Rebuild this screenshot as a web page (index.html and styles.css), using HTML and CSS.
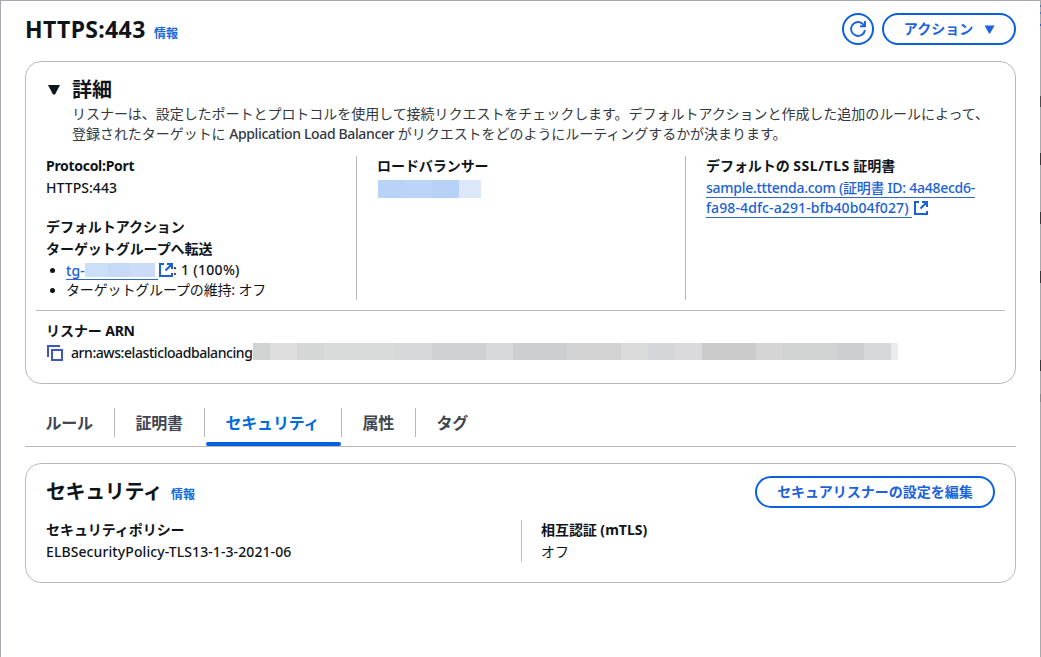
FILE: index.html
```html
<!DOCTYPE html>
<html lang="ja">
<head>
<meta charset="utf-8">
<title>HTTPS:443</title>
<link rel="stylesheet" href="styles.css">
</head>
<body>
<div class="page">
  <header class="page-header">
    <h1 class="title">HTTPS:443</h1>
    <a class="info">情報</a>
    <div class="actions">
      <button class="btn btn-round" aria-label="更新">
        <svg class="ico-refresh" width="18" height="18" viewBox="0 0 18 18" fill="none" stroke="currentColor" stroke-width="1.900"><path d="M16 10A7 7 0 1 1 14.3 4.300L16 6"/><path d="M16 1v5.200H11"/></svg>
      </button>
      <button class="btn btn-actions"><span>アクション</span>
        <svg width="11" height="9" viewBox="0 0 11 9"><path d="M.5.500h10L6 8.500H5z" fill="currentColor"/></svg>
      </button>
    </div>
  </header>

  <section class="card details">
    <div class="details-head">
      <svg class="caret" width="12" height="10" viewBox="0 0 12 10"><path d="M0 0h12L7 9.500H5z" fill="currentColor"/></svg>
      <div>
        <h2 class="h2">詳細</h2>
        <p class="desc">リスナーは、設定したポートとプロトコルを使用して接続リクエストをチェックします。デフォルトアクションと作成した追加のルールによって、<br>登録されたターゲットに <span class="lat">Application Load Balancer</span> がリクエストをどのようにルーティングするかが決まります。</p>
      </div>
    </div>
    <div class="cols">
      <div class="col">
        <h3 class="label lat-b">Protocol:Port</h3>
        <p class="value lat-wide">HTTPS:443</p>
        <h3 class="label second">デフォルトアクション</h3>
        <h3 class="label forward">ターゲットグループへ転送</h3>
        <ul class="list">
          <li><a class="link tg">tg-<span class="mask mask-tg"></span></a><svg class="ext" width="14" height="14" viewBox="0 0 14 14" fill="none" stroke="currentColor" stroke-width="2"><path d="M5 1H1v12h12v-3M8 1h5v5M13 1L6.500 7.500"/></svg><span class="weight">: 1 (100%)</span></li>
          <li>ターゲットグループの維持: オフ</li>
        </ul>
      </div>
      <div class="col">
        <h3 class="label">ロードバランサー</h3>
        <div class="mask mask-lb"></div>
      </div>
      <div class="col">
        <h3 class="label">デフォルトの <span class="ssl">SSL/TLS</span> 証明書</h3>
        <p class="value cert"><a class="link cert1">sample.tttenda.com (証明書 ID: 4a48ecd6-</a><br><a class="link cert2">fa98-4dfc-a291-bfb40b04f027)</a><svg class="ext" width="14" height="14" viewBox="0 0 14 14" fill="none" stroke="currentColor" stroke-width="2"><path d="M5 1H1v12h12v-3M8 1h5v5M13 1L6.500 7.500"/></svg></p>
      </div>
    </div>
    <div class="arn">
      <h3 class="label">リスナー <span class="lat-b">ARN</span></h3>
      <div class="arn-row">
        <svg class="copy" width="16" height="16" viewBox="0 0 16 16" fill="none" stroke="currentColor" stroke-width="2"><path d="M1 12V1h12"/><path d="M5 5h10v10H5z"/></svg>
        <span class="lat arn-text">arn:aws:elasticloadbalancing</span><span class="mask mask-arn"></span>
      </div>
    </div>
  </section>

  <nav class="tabs">
    <a class="tab t1">ルール</a>
    <a class="tab t2">証明書</a>
    <a class="tab t3 active">セキュリティ</a>
    <a class="tab t4">属性</a>
    <a class="tab t5">タグ</a>
  </nav>

  <section class="card security">
    <div class="sec-head">
      <h2 class="h2 sec-title">セキュリティ</h2>
      <a class="info">情報</a>
      <button class="btn btn-edit">セキュアリスナーの設定を編集</button>
    </div>
    <div class="sec-cols">
      <div class="sec-col">
        <h3 class="label">セキュリティポリシー</h3>
        <p class="value policy">ELBSecurityPolicy-TLS13-1-3-2021-06</p>
      </div>
      <div class="sec-col">
        <h3 class="label">相互認証 <span class="mtls">(mTLS)</span></h3>
        <p class="value">オフ</p>
      </div>
    </div>
  </section>
  <div class="edge"></div>
</div>
</body>
</html>
```
FILE: styles.css
```css
* { box-sizing: border-box; margin: 0; padding: 0; }
body {
  width: 1041px; height: 657px; overflow: hidden; background: #fff; color: #0f141a;
  font: 14px/20px "Noto Sans", "Noto Sans CJK JP", sans-serif;
  letter-spacing: -0.06px; white-space: nowrap;
}
.page {
  position: relative; width: 1041px; height: 657px; padding: 0 24px;
  border: solid #a9a8ae; border-width: 1px 1px 0 1px;
}
/* sliver of the neighbouring panel along the right edge */
.edge {
  position: absolute; right: -1px; top: 0; width: 1px; height: 656px;
  background: linear-gradient(#a9a8ae 0 4px, #3b7bd8 4px 6px, #a9a8ae 6px 11px, #3b7bd8 11px 13px, #a9a8ae 13px 23px, #1b62dc 23px 25px, #a9a8ae 25px 95px, #4c4c50 95px 106px, #a9a8ae 106px 152px, #38383c 152px 164px, #a9a8ae 164px 211px, #38383c 211px 223px, #a9a8ae 223px 270px, #38383c 270px 282px, #a9a8ae 282px 359px, #38383c 359px 370px, #a9a8ae 370px 393px, #85858a 393px 401px, #a9a8ae 401px);
}
.page-header { display: flex; height: 60px; }
.title { font-size: 23px; line-height: 30px; margin-top: 13px; width: 129px; letter-spacing: 0.35px; font-weight: 700; }
.info { color: #1469e0; font-size: 12px; font-weight: 700; line-height: 16px; margin-top: 25px; }
.actions { margin: 12px 0 0 auto; display: flex; gap: 8px; }
.btn {
  height: 32px; border: 2px solid #0b60dd; border-radius: 16px; background: #fff; color: #1b62dc;
  font: 700 14px/20px "Noto Sans", "Noto Sans CJK JP", sans-serif;
  display: flex; align-items: center; justify-content: center;
}
.btn-round { width: 32px; }
.btn-actions { width: 134px; gap: 11px; padding-left: 1px; }
.ico-refresh { flex: none; }
.card { border: 1px solid #b9babf; border-radius: 16px; width: 991px; }
.details { height: 323px; padding: 17px 10px 0; }
.details-head { display: flex; height: 77px; padding-left: 12px; gap: 12px; }
.caret { margin-top: 6px; }
.h2 { font-size: 20px; line-height: 22px; }
.desc { color: #333843; margin-top: 3px; letter-spacing: -0.04px; }
.cols { display: grid; grid-template-columns: 320px 329px 320px; height: 155px; padding-bottom: 10px; border-bottom: 1px solid #b9babf; }
.col { padding-left: 20px; }
.col:first-child { padding-left: 10px; }
.col + .col { border-left: 1px solid #b9babf; }
.label { font-size: 14px; line-height: 20px; font-weight: 700; margin-bottom: 2px; }
.second { margin-top: 19px; }
.forward { margin-bottom: 1px; }
.list { list-style: none; }
.list li { position: relative; padding-left: 20px; height: 20px; display: flex; align-items: center; }
.list li::before { content: ""; position: absolute; left: 4px; top: 8px; width: 5px; height: 5px; border-radius: 50%; background: #0f141a; }
.list li + li { letter-spacing: -0.15px; }
.link { color: #1b60d8; display: inline-block; height: 20px; line-height: 20px; border-bottom: 1px solid #3464cf; font-weight: 500; vertical-align: top; }
.tg { display: flex; width: 92px; height: 19px; letter-spacing: 0.1px; }
.ext { color: #1b60d8; }
.list .ext { margin-left: 1px; }
.cert1 { letter-spacing: -0.27px; }
.cert2 { letter-spacing: 0.11px; width: 206px; }
.cert .ext { margin-left: 2px; vertical-align: -2px; }
.mask { display: block; flex: none; }
.mask-tg { width: 70px; height: 14px; margin-top: 2px; background: linear-gradient(90deg, #cbdff9 0 23px, #c6daf7 23px 46px, #cadcf8 46px); }
.mask-lb { width: 103px; height: 18px; margin-top: 4px; margin-left: 1px; background: linear-gradient(90deg, #b9d2f7 0 26px, #bcd4f7 26px 54px, #b8d1f6 54px 81px, #dce8fa 81px); }
.arn { padding: 10px 0 0 10px; }
.arn-row { display: flex; align-items: center; height: 20px; padding-left: 1px; }
.copy { color: #3f57c4; flex: none; }
.arn-text { width: 182px; margin-left: 8px; }
.arn-row .arn-text { letter-spacing: -0.43px; }
.mask-arn {
  width: 645px; height: 17px; margin-top: -3px;
  background: linear-gradient(90deg, #d1d3d2 0 17px, #dedede 17px 44px, #d5d7d6 44px 71px, #d9dada 71px 141px, #d5d9da 141px 179px, #d0d1d2 179px 233px, #d8d9da 233px 260px, #cdcecf 260px 314px, #d3d3d4 314px 368px, #dbdbdc 368px 395px, #d5d6d9 395px 422px, #dadadc 422px 449px, #cbcbcb 449px 503px, #d4d5d4 503px 530px, #d1d3d2 530px 584px, #cdced0 584px 611px, #d7d8da 611px 638px, #ebebed 638px);
}
.lat { letter-spacing: -0.36px; font-weight: 500; }
.lat-wide { letter-spacing: 0.05px; font-weight: 500; }
.weight { letter-spacing: 0.3px; font-weight: 500; }
.policy { letter-spacing: 0.09px; font-weight: 500; }
.lat-b { letter-spacing: -0.3px; }
.ssl { letter-spacing: 0.55px; }
.mtls { letter-spacing: 0.05px; }
.tabs { display: flex; height: 63px; padding-top: 24px; border-bottom: 1px solid #b9babf; }
.tab { font-size: 16px; font-weight: 600; line-height: 30px; height: 29px; color: #424650; padding-left: 20.5px; border-right: 1px solid #b9babf; letter-spacing: -0.2px; }
.t1 { width: 90px; }
.t2 { width: 90px; }
.t3 { width: 137px; }
.t4 { width: 74px; }
.t5 { border: 0; }
.active { color: #006ce0; position: relative; }
.active::after { content: ""; position: absolute; left: 1px; right: 0; top: 34px; height: 4px; border-radius: 2px; background: #0761df; }
.security { height: 120px; margin-top: 16px; padding: 12px 20px 0; }
.sec-head { display: flex; height: 44px; }
.sec-title { width: 125px; line-height: 32px; letter-spacing: -0.4px; }
.sec-head .info { margin-top: 11px; }
.btn-edit { width: 240px; margin-left: auto; }
.sec-cols { display: grid; grid-template-columns: 475px 475px; height: 42px; }
.sec-col + .sec-col { border-left: 1px solid #b9babf; padding-left: 19px; }
```
